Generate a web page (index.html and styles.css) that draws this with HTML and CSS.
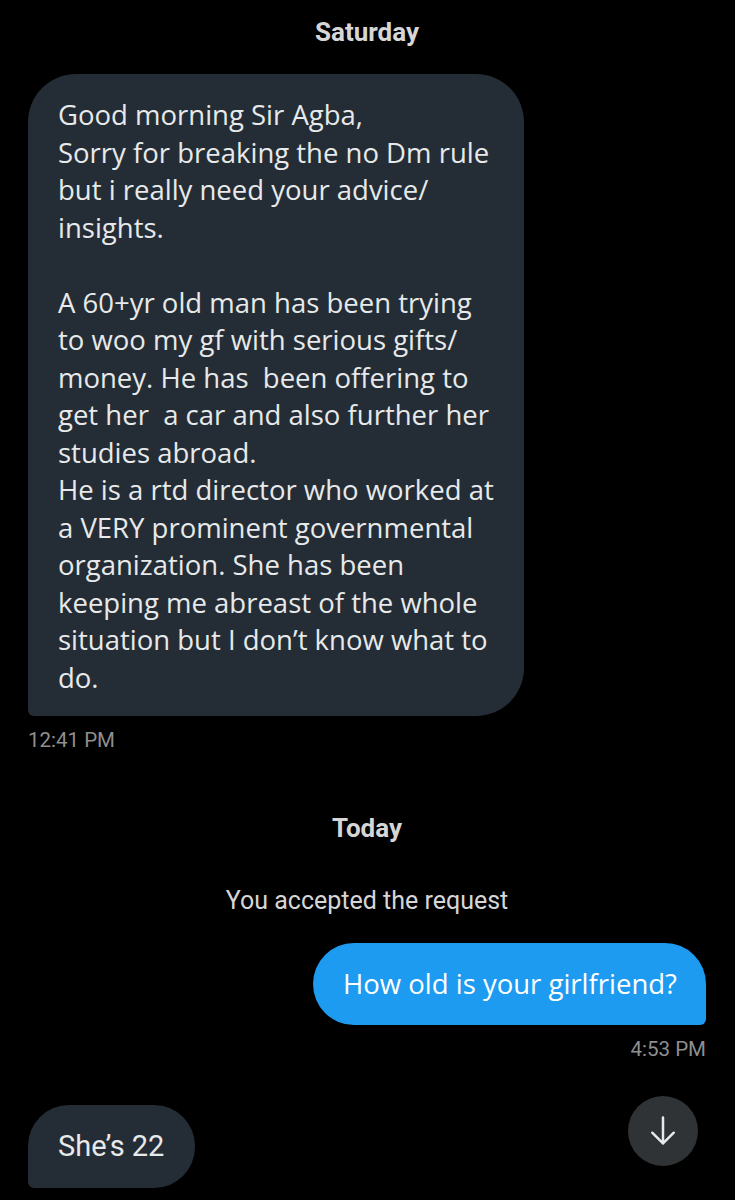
FILE: index.html
```html
<!DOCTYPE html>
<html>
<head>
<meta charset="UTF-8">
<title>Messages</title>
<link rel="stylesheet" href="styles.css">
</head>
<body>
	<div class="chat">
		<div class="day saturday">Saturday</div>

		<div class="row in">
			<div class="bubble big">
				Good morning Sir Agba,<br>
				Sorry for breaking the no Dm rule<br>
				but i really need your advice/<br>
				insights.<br>
				<br>
				A 60+yr old man has been trying<br>
				to woo my gf with serious gifts/<br>
				money. He has&nbsp; been offering to<br>
				get her&nbsp; a car and also further her<br>
				studies abroad.<br>
				He is a rtd director who worked at<br>
				a VERY prominent governmental<br>
				organization. She has been<br>
				keeping me abreast of the whole<br>
				situation but I don’t know what to<br>
				do.
			</div>
		</div>
		<div class="time">12:41 PM</div>

		<div class="day today">Today</div>
		<div class="notice">You accepted the request</div>

		<div class="row out">
			<div class="bubble blue">How old is your girlfriend?</div>
		</div>
		<div class="time right">4:53 PM</div>

		<div class="row in">
			<div class="bubble small">She’s 22</div>
		</div>
	</div>

	<!-- scroll down button -->
	<div class="scroll-btn">
		<svg width="34" height="34" viewBox="0 0 30 30">
			<path d="M15 3 V26 M5.5 16.5 L15 26 L24.5 16.5" fill="none" stroke="#e7e9ea" stroke-width="2.2" stroke-linecap="round" stroke-linejoin="round"/>
		</svg>
	</div>
</body>
</html>
```

FILE: styles.css
```css
body {
	margin: 0;
	background: #000;
	color: #e7e9ea;
	font-family: Roboto, "Liberation Sans", sans-serif;
}

.chat {
	padding: 0 29px 0 28px;
}

.day {
	text-align: center;
	font-weight: bold;
	font-size: 26px;
	color: #d6d6d6;
	line-height: 30px;
}

.saturday {
	padding-top: 17px;
	margin-bottom: 27px;
}

.today {
	margin-top: 61px;
}

.notice {
	text-align: center;
	font-size: 25px;
	color: #d6d6d6;
	line-height: 30px;
	margin-top: 43px;
	margin-bottom: 27px;
}

.row {
	display: flex;
}

.row.out {
	justify-content: flex-end;
}

.bubble {
	font-family: "Open Sans", sans-serif;
	font-size: 27.5px;
	line-height: 37.5px;
	box-sizing: border-box;
}

.big {
	width: 496px;
	background: #242d35;
	padding: 22px 20px 20px 30px;
	border-radius: 48px 48px 48px 6px;
	white-space: nowrap;
}

.blue {
	background: #1d9bf0;
	color: #fff;
	height: 82px;
	padding: 22px 29px 22px 30px;
	border-radius: 41px 41px 6px 41px;
}

.small {
	font-family: Roboto, sans-serif;
	font-size: 29px;
	background: #242d35;
	height: 83px;
	padding: 26px 31px 0 30px;
	border-radius: 41px 41px 41px 6px;
	line-height: 30px;
}

.time {
	font-size: 20.5px;
	color: #8f8f8f;
	line-height: 24px;
	margin-top: 12px;
}

.time.right {
	text-align: right;
	margin-bottom: 44px;
}

.scroll-btn {
	position: absolute;
	left: 628px;
	top: 1096px;
	width: 70px;
	height: 70px;
	border-radius: 50%;
	background: #2f3336;
	display: flex;
	align-items: center;
	justify-content: center;
}
```
